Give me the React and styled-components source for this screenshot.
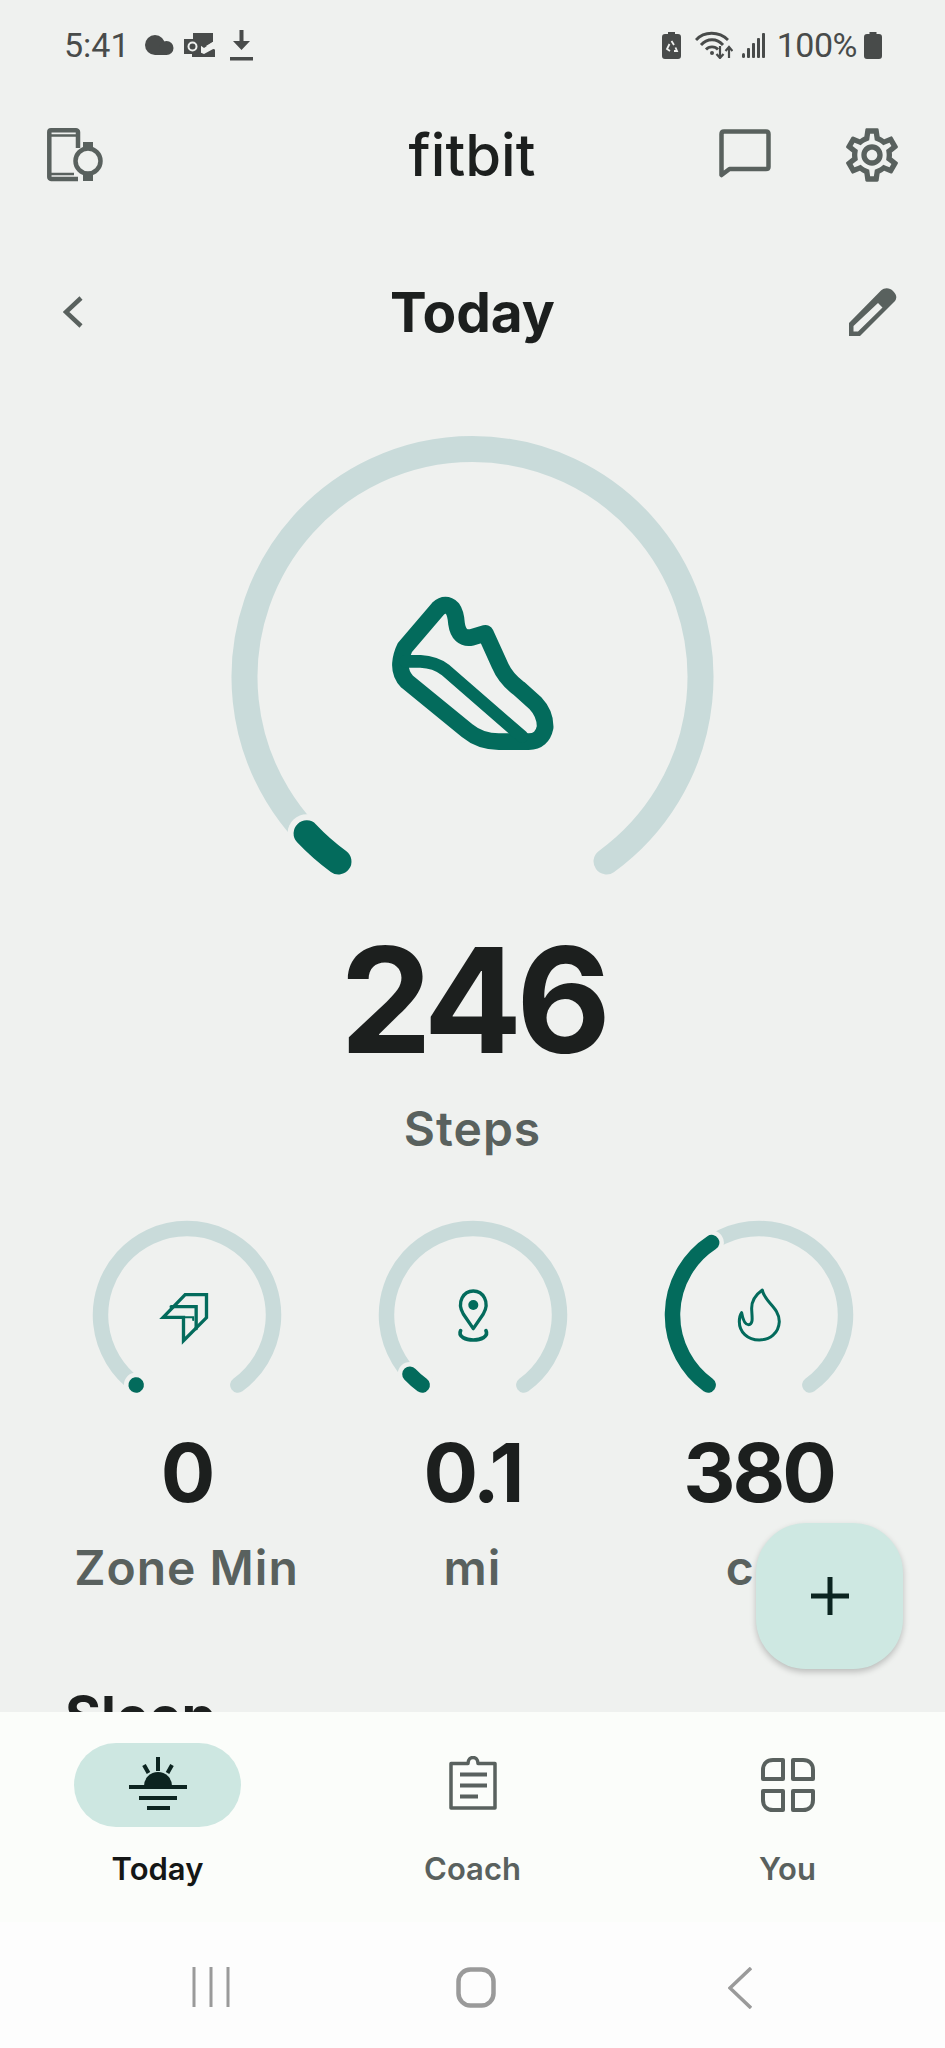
import React from "react";
import styled, { createGlobalStyle } from "styled-components";
import { MdOutlineSettings } from "react-icons/md";

const Global = createGlobalStyle`
  html, body { margin: 0; padding: 0; background: #eff1ef; }
  #root { width: 945px; height: 2048px; overflow: hidden; }
`;

const GREEN = "#036b5c";
const TRACK = "#c9dbda";
const BG = "#eff1ef";
const GREY = "#59615e";
const INK = "#1c1f1e";
const STATUS = "#484b4a";

const Screen = styled.div`
  position: relative;
  width: 945px;
  height: 2048px;
  display: flex;
  flex-direction: column;
  background: ${BG};
  font-family: Inter, "Liberation Sans", sans-serif;
`;
const Content = styled.main`
  height: 1712px;
  overflow: hidden;
  flex: none;
  display: flex;
  flex-direction: column;
`;
const StatusBar = styled.div`
  height: 90px;
  flex: none;
  display: flex;
  align-items: center;
  justify-content: space-between;
  padding: 0 63px 0 64px;
  color: ${STATUS};
  font-family: Roboto, sans-serif;
  font-size: 34px;
`;
const StatusGroup = styled.div`
  display: flex;
  align-items: center;
`;
const StatusIcon = styled.svg`
  display: block;
  flex: none;
  margin-left: ${(p) => p.$gap}px;
`;
const StatusText = styled.span`
  margin-left: ${(p) => p.$gap || 0}px;
  line-height: 1;
  letter-spacing: ${(p) => p.$tight || 0}px;
`;
const AppBar = styled.header`
  height: 130px;
  flex: none;
  display: grid;
  grid-template-columns: 1fr auto 1fr;
  align-items: center;
  padding: 0 48px 0 47px;
`;
const Logo = styled.div`
  font-weight: 500;
  font-size: 58px;
  color: ${INK};
  line-height: 1;
`;
const Actions = styled.div`
  display: flex;
  justify-content: flex-end;
  align-items: center;
  gap: 75px;
`;
const GearBox = styled.div`
  width: 51px;
  height: 53px;
  display: flex;
  align-items: center;
  justify-content: center;
  color: ${GREY};
  font-size: 64px;
  svg {
    flex: none;
  }
`;
const TitleRow = styled.div`
  margin-top: 40px;
  height: 104px;
  flex: none;
  display: grid;
  grid-template-columns: 1fr auto 1fr;
  align-items: center;
  padding: 0 48px;
`;
const Title = styled.h1`
  margin: 0;
  font-size: 55px;
  font-weight: 700;
  color: ${INK};
  line-height: 1;
`;
const StartCell = styled.div`
  padding-left: 15px;
`;
const EndCell = styled.div`
  display: flex;
  justify-content: flex-end;
`;
const HeroGauge = styled.section`
  margin-top: 56px;
  display: flex;
  flex-direction: column;
  align-items: center;
`;
const BigValue = styled.div`
  margin-top: 27px;
  font-size: 146px;
  font-weight: 700;
  letter-spacing: -6px;
  line-height: 1;
  color: ${INK};
`;
const BigLabel = styled.div`
  margin-top: 32px;
  font-size: 48px;
  font-weight: 600;
  letter-spacing: 1px;
  line-height: 1;
  color: ${GREY};
`;
const Metrics = styled.section`
  margin-top: 62px;
  padding: 0 43.5px;
  display: grid;
  grid-template-columns: repeat(3, 286px);
`;
const Metric = styled.div`
  display: flex;
  flex-direction: column;
  align-items: center;
`;
const MetricValue = styled.div`
  margin-top: 28px;
  font-size: 81px;
  font-weight: 700;
  letter-spacing: -3px;
  line-height: 1;
  color: ${INK};
`;
const MetricLabel = styled.div`
  margin-top: 30px;
  margin-left: ${(p) => p.$nudge || 0}px;
  font-size: 48px;
  font-weight: 600;
  letter-spacing: 1px;
  line-height: 1;
  color: ${GREY};
`;
const Section = styled.h2`
  margin: 97px 0 0 65px;
  font-size: 55px;
  font-weight: 700;
  line-height: 1;
  color: ${INK};
`;
const Fab = styled.button`
  position: absolute;
  left: 756px;
  top: 1523px;
  width: 147px;
  height: 146px;
  border: 0;
  padding: 0;
  border-radius: 50px;
  background: #cee8e2;
  box-shadow: 0 3px 6px rgba(0, 0, 0, 0.22);
  display: flex;
  align-items: center;
  justify-content: center;
`;
const BottomNav = styled.nav`
  height: 210px;
  flex: none;
  background: #fbfdfa;
  display: grid;
  grid-template-columns: repeat(3, 315px);
`;
const NavItem = styled.div`
  display: flex;
  flex-direction: column;
  align-items: center;
  padding-top: 31px;
`;
const NavPill = styled.div`
  width: 167px;
  height: 84px;
  border-radius: 42px;
  background: ${(p) => (p.$active ? "#cde7e1" : "transparent")};
  display: flex;
  align-items: center;
  justify-content: center;
`;
const NavLabel = styled.div`
  margin-top: 22px;
  font-size: 31px;
  font-weight: 600;
  line-height: 40px;
  color: ${(p) => (p.$active ? "#141716" : GREY)};
`;
const SystemBar = styled.div`
  flex: 1;
  background: #fdfdfd;
  display: grid;
  grid-template-columns: repeat(3, 264.5px);
  align-items: start;
  padding: 45px 0 0 79px;
`;
const SystemCell = styled.div`
  display: flex;
  justify-content: center;
`;
const Plain = styled.svg`
  display: block;
  flex: none;
  margin-bottom: ${(p) => p.$lift || 0}px;
`;

const pt = (cx, cy, r, a) => {
  const t = (a * Math.PI) / 180;
  return [cx - r * Math.sin(t), cy + r * Math.cos(t)];
};
const arc = (cx, cy, r, a0, a1) => {
  const [x0, y0] = pt(cx, cy, r, a0);
  const [x1, y1] = pt(cx, cy, r, a1);
  return `M${x0} ${y0}A${r} ${r} 0 ${a1 - a0 > 180 ? 1 : 0} 1 ${x1} ${y1}`;
};

function Dial({ w, h, cx, cy, r, sw, end, halo, children }) {
  return (
    <Plain width={w} height={h} viewBox={`0 0 ${w} ${h}`} fill="none" strokeLinecap="round">
      <path d={arc(cx, cy, r, 36, 324)} stroke={TRACK} strokeWidth={sw} />
      <path d={arc(cx, cy, r, 36, end)} stroke={BG} strokeWidth={sw + halo} />
      <path d={arc(cx, cy, r, 36, end)} stroke={GREEN} strokeWidth={sw} />
      {children}
    </Plain>
  );
}

const Shoe = () => (
  <g transform="translate(-2.5 0) scale(0.3333)" fill="none" stroke={GREEN} strokeLinejoin="round" strokeLinecap="round">
    <path
      strokeWidth="50"
      d="M583 683 L683 566 Q705 545 726 566 Q736 580 738 610 Q745 660 785 652 L825 640 L868 735 Q885 775 925 805 L975 850 Q1005 882 1004 922 Q995 965 955 965 L865 965 Q810 965 770 932 L590 785 Q568 762 570 730 Q572 705 583 683 Z"
    />
    <path strokeWidth="38" d="M585 724 L630 724 Q675 726 705 750 L935 950" />
  </g>
);

const ZoneIcon = () => (
  <g transform="translate(90 80) scale(0.3333)" fill="none" stroke={GREEN} strokeWidth="10" strokeLinejoin="miter">
    <path d="M38 112 L104 44 H168 V113 L99 182 V112 Z" />
    <path d="M62 80 H137 V146" />
    <path d="M104 112 H128 V120" strokeWidth="6" />
  </g>
);
const PinIcon = () => (
  <g transform="scale(0.3333)" fill="none" stroke={GREEN} strokeWidth="10" strokeLinecap="round" strokeLinejoin="round">
    <path d="M1237 386 L1207 342 C1186 306 1208 273 1237 273 C1266 273 1288 306 1267 342 Z" />
    <circle cx="1237" cy="315" r="15" fill={GREEN} stroke="none" />
    <path strokeWidth="11" d="M1199 392 C1190 410 1215 420 1237 420 C1259 420 1284 410 1275 392" />
  </g>
);
const FlameIcon = () => (
  <g transform="scale(0.3333)" fill="none" stroke={GREEN} strokeWidth="9" strokeLinejoin="round">
    <path d="M367 270 C372 305 418 322 418 365 C416 400 390 420 358 420 C322 420 298 395 298 365 C298 355 300 345 305 338 C308 355 315 374 326 374 C342 374 335 345 335 325 C335 300 350 282 367 270 Z" />
  </g>
);

const metricData = [
  { value: "0", label: "Zone Min", end: 36.01, ox: 60, oy: 1200, cx: 186.5, Icon: ZoneIcon },
  { value: "0.1", label: "mi", end: 46.8, ox: 60, oy: 1200, cx: 472, Icon: PinIcon },
  { value: "380", label: "cal", nudge: 6, end: 146.8, ox: 640, oy: 1200, cx: 759, Icon: FlameIcon },
];

export default function App() {
  return (
    <Screen>
      <Global />
      <Content>
        <StatusBar>
          <StatusGroup>
            <StatusText>5:41</StatusText>
            <StatusIcon $gap={15} width="29" height="20" viewBox="0 0 29 20" fill={STATUS}>
              <circle cx="10" cy="10" r="10" />
              <circle cx="21.500" cy="13" r="7" />
              <rect x="10" y="12" width="12" height="8" />
            </StatusIcon>
            <StatusIcon $gap={10} width="32" height="24" viewBox="0 0 32 24" fill={STATUS}>
              <path d="M9 0H29V9L20 15 9 7Z" />
              <path d="M8 16L20 21 31 15V24H8Z" />
              <rect x="0" y="6" width="17" height="15" />
              <path d="M22 13L32 7V17Z" fill={BG} />
              <circle cx="8.500" cy="13.500" r="4" fill="none" stroke={BG} strokeWidth="2" />
            </StatusIcon>
            <StatusIcon $gap={14} width="23" height="31" viewBox="0 0 23 31" fill={STATUS}>
              <path d="M9.500 0H13.500V11H20L11.500 20 3 11H9.500Z" />
              <rect x="0" y="27" width="23" height="3.500" />
            </StatusIcon>
          </StatusGroup>
          <StatusGroup>
            <StatusIcon $gap={0} width="19" height="27" viewBox="0 0 19 27" fill={STATUS}>
              <path d="M6 0H13V2H16C18 2 19 3 19 5V24C19 26 18 27 16 27H3C1 27 0 26 0 24V5C0 3 1 2 3 2H6Z" />
              <path d="M9.500 9L12 13M7.500 12L5 17 8 19M12 19H15L13.500 15.500" stroke={BG} strokeWidth="1.800" fill="none" />
            </StatusIcon>
            <StatusIcon $gap={14} width="38" height="28" viewBox="0 0 38 28" fill="none" stroke={STATUS} strokeWidth="2.800">
              <path d="M1 9C9 0 24 0 33 9" />
              <path d="M6 14C12 7 22 7 28 14" />
              <path d="M11 18.500C14 15 20 15 23 18.500" />
              <circle cx="17" cy="22" r="2" fill={STATUS} stroke="none" />
              <path d="M25 15V27M21.500 23L25 27 28.500 23" strokeWidth="2.200" />
              <path d="M34 27V16M30.500 20L34 16 37.500 20" strokeWidth="2.200" />
            </StatusIcon>
            <StatusIcon $gap={9} width="23" height="25" viewBox="0 0 23 25" fill={STATUS}>
              <rect x="0" y="20" width="3" height="5" rx="1.500" />
              <rect x="5" y="15" width="3" height="10" rx="1" />
              <rect x="10" y="10" width="3" height="15" rx="1" />
              <rect x="15" y="5" width="3" height="20" rx="1" />
              <rect x="20" y="0" width="3" height="25" rx="1" />
            </StatusIcon>
            <StatusText $gap={12} $tight={-0.5}>100%</StatusText>
            <StatusIcon $gap={7} width="18" height="27" viewBox="0 0 18 27" fill={STATUS}>
              <path d="M5.500 0H12.500V2H15C17 2 18 3 18 5V24C18 26 17 27 15 27H3C1 27 0 26 0 24V5C0 3 1 2 3 2H5.500Z" />
            </StatusIcon>
          </StatusGroup>
        </StatusBar>

        <AppBar>
          <Plain width="57" height="54" viewBox="0 0 57 54" fill="none" stroke={GREY} strokeWidth="4.500">
            <path d="M31 20V4C31 3 30 2.300 29 2.300H4C3 2.300 2.300 3 2.300 4V49C2.300 50 3 51 4 51H31" />
            <path d="M3 7.500H30M3 46H27" strokeWidth="2.500" />
            <circle cx="41" cy="33" r="12.500" />
            <path d="M36 14H46V21H36ZM36 45H46V53H36Z" fill={GREY} stroke="none" />
          </Plain>
          <Logo>fitbit</Logo>
          <Actions>
            <Plain width="52" height="52" viewBox="0 0 52 52" fill="none" stroke={GREY} strokeWidth="4.500" strokeLinejoin="round">
              <path d="M2.500 46V5C2.500 3.500 3.500 2.500 5 2.500H47C48.500 2.500 49.500 3.500 49.500 5V38C49.500 39.500 48.500 40 47 40H10.500Z" />
            </Plain>
            <GearBox>
              <MdOutlineSettings />
            </GearBox>
          </Actions>
        </AppBar>

        <TitleRow>
          <StartCell>
            <Plain width="20" height="32" viewBox="0 0 20 32" fill="none" stroke={GREY} strokeWidth="4.500">
              <path d="M18 2L3 16 18 30" />
            </Plain>
          </StartCell>
          <Title>Today</Title>
          <EndCell>
            <Plain width="48" height="48" viewBox="0 0 48 48" fill={GREY} fillRule="evenodd">
              <path d="M0 35L32 2.500C36 -1 41 0 44 3 48 7 48 10 46 13L11 48H0ZM4.500 38L29 15 33.500 19.500 9 43.500H4.500Z" />
            </Plain>
          </EndCell>
        </TitleRow>

        <HeroGauge>
          <Dial w={520} h={480} cx={259.5} cy={257} r={228} sw={26} end={46.7} halo={12}>
            <Shoe />
          </Dial>
          <BigValue>246</BigValue>
          <BigLabel>Steps</BigLabel>
        </HeroGauge>

        <Metrics>
          {metricData.map(({ value, label, nudge, end, Icon, ox, oy, cx }) => (
            <Metric key={label}>
              <Dial w={200} h={190} cx={100} cy={100} r={86.5} sw={15.5} end={end} halo={9}>
                <g transform={`translate(${100 - cx + ox} ${100 - 1315 + oy})`}>
                  <Icon />
                </g>
              </Dial>
              <MetricValue>{value}</MetricValue>
              <MetricLabel $nudge={nudge}>{label}</MetricLabel>
            </Metric>
          ))}
        </Metrics>

        <Section>Sleep</Section>
      </Content>

      <Fab aria-label="Add">
        <Plain width="38" height="38" viewBox="0 0 38 38" stroke="#0b2420" strokeWidth="5">
          <path d="M19 0V38M0 19H38" />
        </Plain>
      </Fab>

      <BottomNav>
        <NavItem>
          <NavPill $active>
            <Plain $lift={4} width="60" height="54" viewBox="0 0 60 54" fill="#0c2420" stroke="#0c2420" strokeWidth="4">
              <path d="M30 1V15M16 9L20.500 17M44 9L39.500 17" fill="none" />
              <path d="M16 30A14 14 0 0 1 44 30Z" stroke="none" />
              <path d="M1 31H59M11 42H49M19 52H42" fill="none" />
            </Plain>
          </NavPill>
          <NavLabel $active>Today</NavLabel>
        </NavItem>
        <NavItem>
          <NavPill>
            <Plain $lift={4} width="48" height="54" viewBox="0 0 48 54" fill="none" stroke={GREY} strokeWidth="3.500">
              <path d="M2 7.500H19C19 -0.500 29 -0.500 29 7.500H46V52H2Z" strokeLinejoin="round" />
              <path d="M11 18.500H38M11 29.500H38M11 40.500H29" strokeWidth="4" />
            </Plain>
          </NavPill>
          <NavLabel>Coach</NavLabel>
        </NavItem>
        <NavItem>
          <NavPill>
            <Plain width="54" height="54" viewBox="0 0 54 54" fill="none" stroke={GREY} strokeWidth="4" strokeLinejoin="round">
              <path d="M22 2H12C6 2 2 6 2 12V21H22Z" />
              <path d="M32 2H42C48 2 52 6 52 12V21H32Z" />
              <path d="M22 52H12C6 52 2 48 2 42V33H22Z" />
              <path d="M32 52H42C48 52 52 48 52 42V33H32Z" />
            </Plain>
          </NavPill>
          <NavLabel>You</NavLabel>
        </NavItem>
      </BottomNav>

      <SystemBar>
        <SystemCell>
          <Plain width="38" height="40" viewBox="0 0 38 40" stroke="#9a9a9a" strokeWidth="3">
            <path d="M2 0V40M19 0V40M36 0V40" />
          </Plain>
        </SystemCell>
        <SystemCell>
          <Plain width="40" height="41" viewBox="0 0 40 41" fill="none" stroke="#9a9a9a" strokeWidth="4.500">
            <rect x="2.500" y="2.500" width="35" height="36" rx="12" />
          </Plain>
        </SystemCell>
        <SystemCell>
          <Plain width="24" height="42" viewBox="0 0 24 42" fill="none" stroke="#9a9a9a" strokeWidth="3.500">
            <path d="M23 1L2 21 23 41" />
          </Plain>
        </SystemCell>
      </SystemBar>
    </Screen>
  );
}
